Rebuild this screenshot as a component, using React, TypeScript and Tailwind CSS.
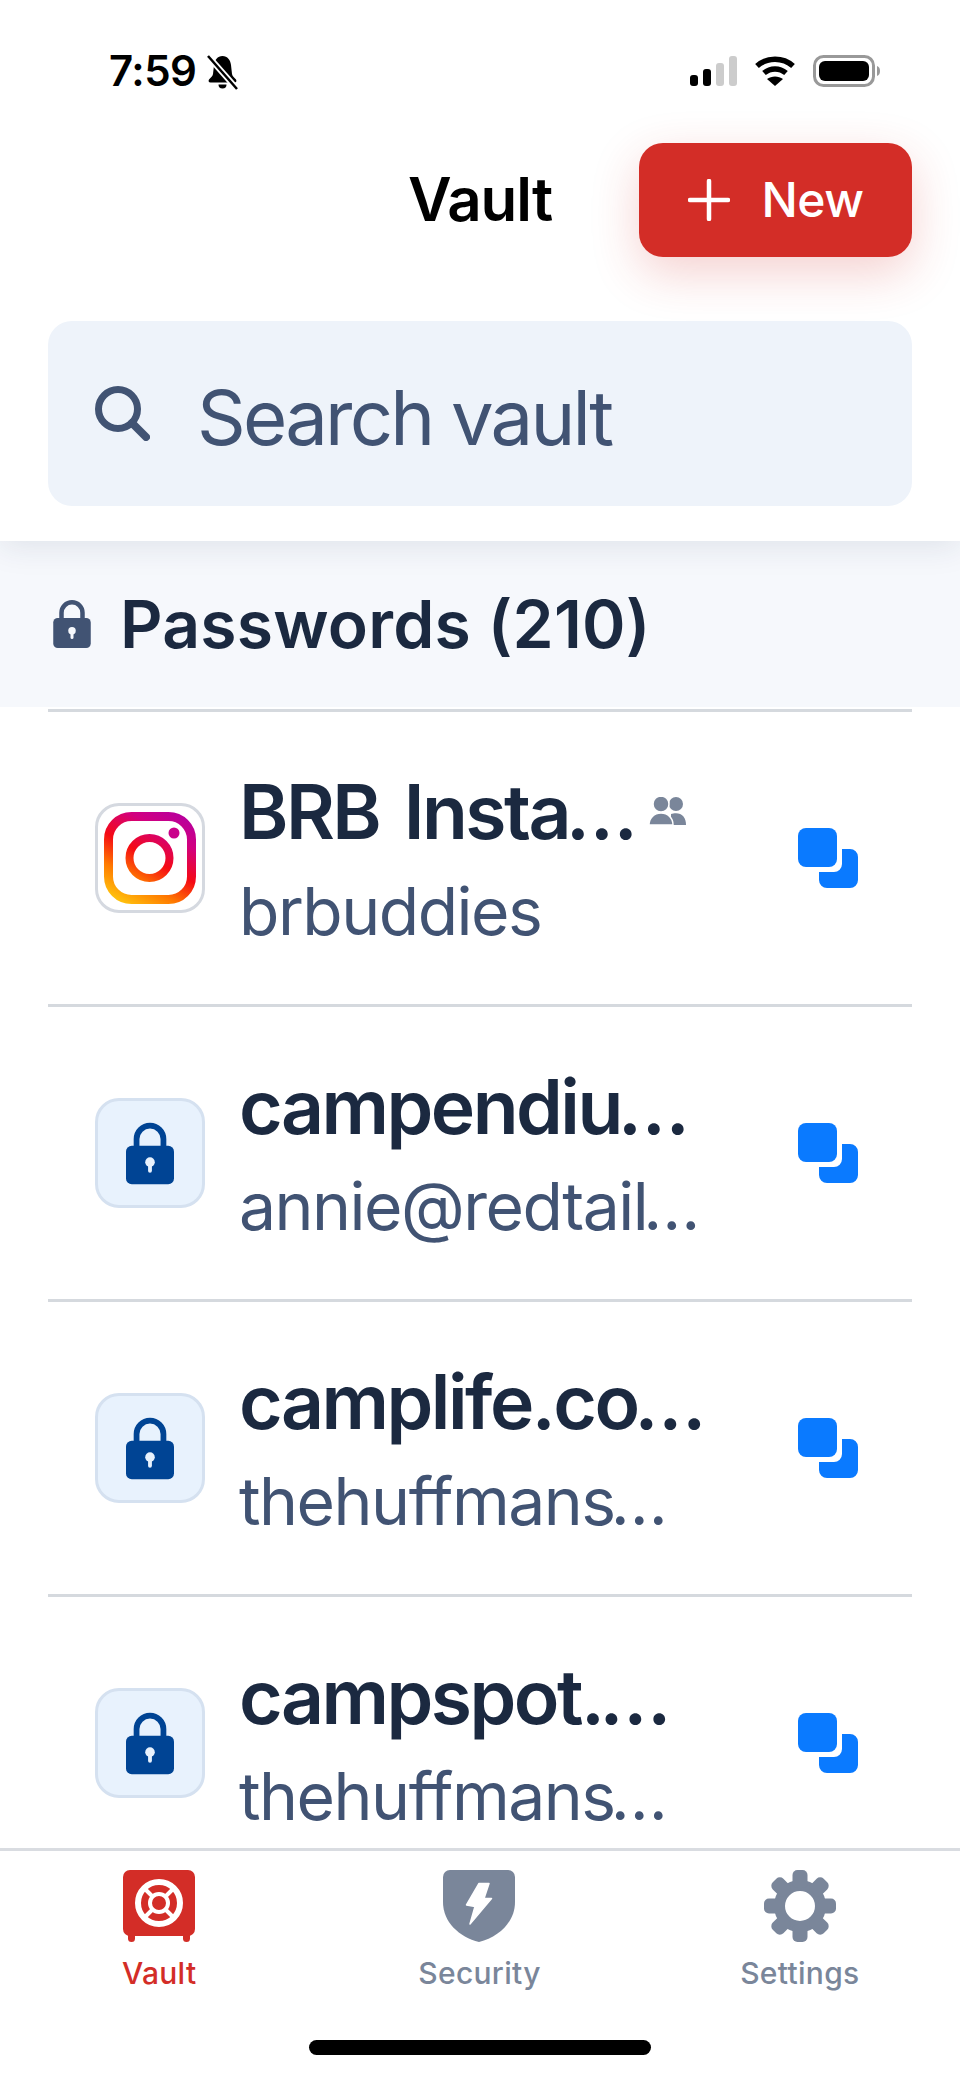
const rows = [
  { title: "BRB Insta", sub: "brbuddies", brand: true, shared: true, subCut: false },
  { title: "campendiu", sub: "annie@redtail", subCut: true },
  { title: "camplife.co", sub: "thehuffmans", subCut: true },
  { title: "campspot.", sub: "thehuffmans", subCut: true },
];

function LockGlyph({ className, hole }: { className: string; hole: string }) {
  return (
    <svg viewBox="0 0 50 64" className={className}>
      <path d="M11 28V17a14 14 0 0 1 28 0v11" fill="none" stroke="currentColor" strokeWidth="6" />
      <rect x="0" y="24" width="50" height="40" rx="6" fill="currentColor" />
      <circle cx="25" cy="41" r="5" fill={hole} />
      <rect x="23" y="42" width="4" height="10" rx="2" fill={hole} />
    </svg>
  );
}

function InstagramLogo() {
  return (
    <svg viewBox="0 0 92 92" className="w-[92px] h-[92px]">
      <defs>
        <linearGradient id="ig" x1="20" y1="92" x2="72" y2="0" gradientUnits="userSpaceOnUse">
          <stop offset="0" stopColor="#ffc20e" />
          <stop offset="0.25" stopColor="#ff7a00" />
          <stop offset="0.5" stopColor="#f50a14" />
          <stop offset="0.78" stopColor="#d2007f" />
          <stop offset="1" stopColor="#b8009c" />
        </linearGradient>
      </defs>
      <rect x="4.5" y="4.5" width="83" height="83" rx="23" fill="none" stroke="url(#ig)" strokeWidth="9" />
      <circle cx="45.500" cy="46" r="20" fill="none" stroke="url(#ig)" strokeWidth="8" />
      <circle cx="70" cy="21" r="5.500" fill="#c9008a" />
    </svg>
  );
}

function CopyIcon() {
  return (
    <svg viewBox="0 0 60 60" className="w-[60px] h-[60px] shrink-0 ml-auto text-[#0a7aff]" fill="currentColor">
      <rect x="0" y="0" width="39" height="39" rx="8" />
      <path d="M44 21h8a8 8 0 0 1 8 8v23a8 8 0 0 1-8 8H29a8 8 0 0 1-8-8v-8h15a8 8 0 0 0 8-8z" />
    </svg>
  );
}

function PeopleIcon() {
  return (
    <svg viewBox="0 0 37 28" className="w-[37px] h-[28px] shrink-0 ml-[14px] mb-[2px] text-[#7a869a]" fill="currentColor">
      <circle cx="27" cy="7" r="7" />
      <path d="M22 28v-11c1.500-.6 3-.8 5-.8 6 0 10 4 10 11.800z" />
      <circle cx="12" cy="7" r="8" stroke="#fff" strokeWidth="1.500" />
      <path d="M0 28c0-7 5-12 12-12s12 5 12 12z" stroke="#fff" strokeWidth="1.500" />
    </svg>
  );
}

function VaultIcon() {
  return (
    <svg viewBox="0 0 72 72" className="w-[72px] h-[72px] text-[#d32d27]">
      <rect x="0" y="0" width="72" height="66" rx="7" fill="currentColor" />
      <rect x="5" y="60" width="7" height="12" rx="3.500" fill="currentColor" />
      <rect x="60" y="60" width="7" height="12" rx="3.500" fill="currentColor" />
      <circle cx="36" cy="33" r="21" fill="none" stroke="#fff" strokeWidth="6" />
      <circle cx="36" cy="33" r="9" fill="none" stroke="#fff" strokeWidth="4" />
      <path d="M22 19l8 8M50 19l-8 8M22 47l8-8M50 47l-8-8" stroke="#fff" strokeWidth="4" />
    </svg>
  );
}

function ShieldIcon() {
  return (
    <svg viewBox="0 0 72 72" className="w-[72px] h-[72px] text-[#7a869a]">
      <path d="M7 0h58a7 7 0 0 1 7 7v25c0 20-16 35-36 40C16 67 0 52 0 32V7a7 7 0 0 1 7-7z" fill="currentColor" />
      <path d="M36 13.500h10l-5 15h7.500L27 54l5-17.500-8.500-1.500z" fill="#fff" stroke="#fff" strokeWidth="1.500" strokeLinejoin="round" />
    </svg>
  );
}

function GearIcon() {
  return (
    <svg viewBox="0 0 72 72" className="w-[72px] h-[72px] text-[#7a869a]" fill="currentColor">
      <circle cx="36" cy="36" r="20.500" fill="none" stroke="currentColor" strokeWidth="11" />
      {[0, 45, 90, 135, 180, 225, 270, 315].map((deg) => (
        <rect key={deg} x="28.500" y="0" width="15" height="18" rx="5" transform={`rotate(${deg} 36 36)`} />
      ))}
    </svg>
  );
}

function StatusBar() {
  return (
    <div className="h-[143px] flex justify-between pl-[109px] pr-[80px] pt-[50px]">
      <div className="flex items-start gap-[11px]">
        <span className="text-[42px] leading-[42px] font-semibold tracking-[-0.5px] text-black">7:59</span>
        <svg viewBox="0 0 31 35" className="w-[31px] h-[35px] mt-[5px]">
          <path d="M15.500 1c5 0 8 4 8.500 9l1 9c.3 2 2 3.500 4 5.500.8 1 .5 3-1.500 3h-24c-2 0-2.300-2-1.500-3 2-2 3.700-3.500 4-5.500l1-9c.5-5 3.500-9 8.500-9z" fill="#000" />
          <path d="M11.500 29.500h8a4 4 0 0 1-8 0z" fill="#000" />
          <path d="M1 1l29 33" stroke="#fff" strokeWidth="6" />
          <path d="M1 1l29 33" stroke="#000" strokeWidth="2.500" />
        </svg>
      </div>
      <div className="flex items-start gap-[18px] pt-[6px]">
        <svg viewBox="0 0 47 30" className="w-[47px] h-[30px]">
          <rect x="0" y="19" width="8" height="11" rx="3" fill="#000" />
          <rect x="13" y="13" width="8" height="17" rx="3" fill="#000" />
          <rect x="26" y="7" width="8" height="23" rx="3" fill="#ccc" />
          <rect x="39" y="0" width="8" height="30" rx="3" fill="#ccc" />
        </svg>
        <svg viewBox="0 0 40 30" className="w-[40px] h-[30px]">
          <path d="M2 10C12 1 28 1 38 10" fill="none" stroke="#000" strokeWidth="5.500" />
          <path d="M9 17c6.500-5.500 15.500-5.500 22 0" fill="none" stroke="#000" strokeWidth="5.500" />
          <path d="M20 30l-8-7c4.500-3.500 11.500-3.500 16 0z" fill="#000" />
        </svg>
        <svg viewBox="0 0 67 32" className="w-[67px] h-[32px] -mt-px">
          <rect x="1.500" y="1.500" width="59" height="29" rx="9" fill="none" stroke="#999" strokeWidth="3" />
          <rect x="6" y="6" width="50" height="20" rx="6" fill="#000" />
          <path d="M64 11c2 .5 3 2.500 3 5s-1 4.500-3 5z" fill="#999" />
        </svg>
      </div>
    </div>
  );
}

export default function App() {
  return (
    <div className="w-full h-screen flex flex-col overflow-hidden bg-white font-['Inter',sans-serif]">
      {/* HEADER */}
      <div className="relative z-10 bg-white pb-[35px] shadow-[0_6px_30px_rgba(30,50,80,0.1)]">
        <StatusBar />
        <div className="px-[48px] grid grid-cols-[1fr_auto_1fr] items-center">
          <div />
          <h1 className="text-[60px] leading-[72px] font-semibold tracking-[-1px] text-black -mt-[2px]">Vault</h1>
          <button className="justify-self-end w-[273px] h-[114px] rounded-[24px] bg-[#d32d27] text-white flex items-center justify-center gap-[32px] shadow-[0_16px_48px_rgba(211,45,39,0.22)]">
            <svg viewBox="0 0 42 42" className="w-[42px] h-[42px]">
              <path d="M21 2v38M2 21h38" stroke="#fff" strokeWidth="4.500" strokeLinecap="round" />
            </svg>
            <span className="text-[48px] leading-[56px] font-medium tracking-[-0.5px]">New</span>
          </button>
        </div>

        <div className="mx-[48px] mt-[64px] h-[185px] rounded-[24px] bg-[#eef3fa] flex items-center pl-[47px] gap-[47px] text-[#415373]">
          <svg viewBox="0 0 55 55" className="w-[55px] h-[55px] shrink-0">
            <circle cx="23" cy="23" r="19.500" fill="none" stroke="currentColor" strokeWidth="7" />
            <path d="M37 37l14 14" stroke="currentColor" strokeWidth="8" strokeLinecap="round" />
          </svg>
          <span className="pt-[6px] text-[76px] leading-[84px] tracking-[-2.8px]">Search vault</span>
        </div>
      </div>

      {/* SECTION TITLE */}
      <div className="h-[166px] shrink-0 bg-[#f6f8fc] flex items-center pl-[53px] gap-[29px]">
        <LockGlyph className="w-[38px] h-[48px] text-[#415373]" hole="#f6f8fc" />
        <span className="text-[66px] leading-[76px] font-semibold tracking-[0.2px] text-[#1b2940]">Passwords (210)</span>
      </div>

      {/* LIST */}
      <div className="flex-1 overflow-hidden mx-[48px] mt-[2px]">
        {rows.map((row) => (
          <div key={row.title} className="h-[295px] border-t-[3px] border-[#d5d9de] flex items-center pl-[47px] pr-[54px]">
            {row.brand ? (
              <div className="w-[110px] h-[110px] shrink-0 rounded-[24px] border-[3px] border-[#d5d9e0] flex items-center justify-center">
                <InstagramLogo />
              </div>
            ) : (
              <div className="w-[110px] h-[110px] shrink-0 rounded-[24px] border-[3px] border-[#d5e1f0] bg-[#e8f2fd] flex items-center justify-center">
                <LockGlyph className="w-[48px] h-[63px] text-[#004494]" hole="#e8f2fd" />
              </div>
            )}
            <div className="ml-[34px] min-w-0">
              <div className="flex items-center">
                <span className="text-[75px] leading-[96px] font-semibold tracking-[-2.5px] [word-spacing:8px] text-[#1b2940] whitespace-nowrap">
                  {row.title}
                  <span className="-ml-[3px]">…</span>
                </span>
                {row.shared && <PeopleIcon />}
              </div>
              <div className="mt-[9px] text-[66px] leading-[84px] tracking-[-1.5px] text-[#415373] whitespace-nowrap">
                {row.sub}
                {row.subCut && <span className="-ml-[4px]">…</span>}
              </div>
            </div>
            <CopyIcon />
          </div>
        ))}
      </div>

      {/* TAB BAR */}
      <div className="h-[231px] shrink-0 bg-white border-t-[3px] border-[#d9dce1] flex flex-col">
        <div className="grid grid-cols-3 -ml-px pt-[19px]">
          <div className="flex flex-col items-center">
            <VaultIcon />
            <span className="mt-[11px] text-[30px] leading-[40px] font-medium tracking-[0.3px] text-[#d32d27]">Vault</span>
          </div>
          <div className="flex flex-col items-center">
            <ShieldIcon />
            <span className="mt-[11px] text-[30px] leading-[40px] font-medium tracking-[0.3px] text-[#7a869a]">Security</span>
          </div>
          <div className="flex flex-col items-center">
            <GearIcon />
            <span className="mt-[11px] text-[30px] leading-[40px] font-medium tracking-[0.3px] text-[#7a869a]">Settings</span>
          </div>
        </div>
        <div className="mx-auto mt-[47px] w-[342px] h-[15px] rounded-full bg-black" />
      </div>
    </div>
  );
}
